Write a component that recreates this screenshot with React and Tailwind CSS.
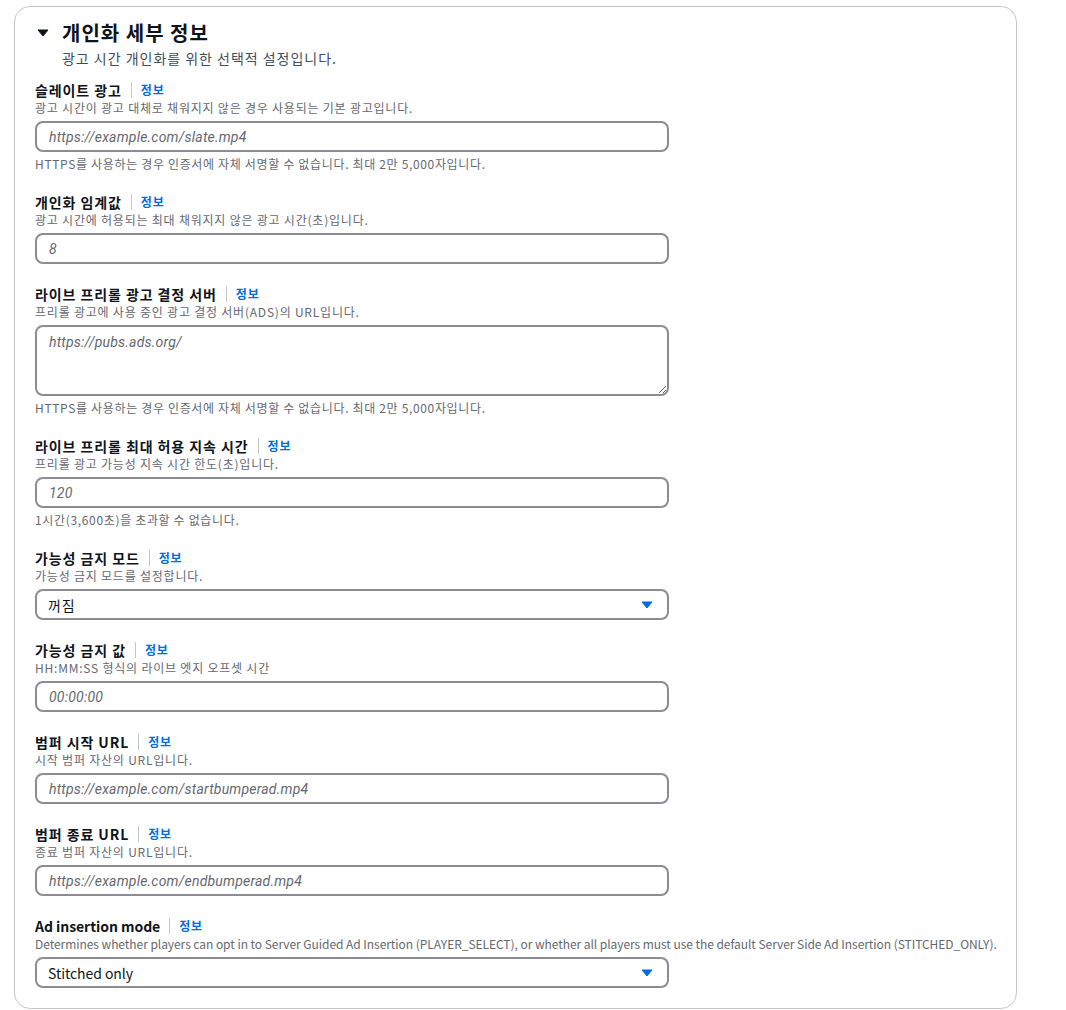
const fields = [
  {
    label: "슬레이트 광고",
    desc: "광고 시간이 광고 대체로 채워지지 않은 경우 사용되는 기본 광고입니다.",
    placeholder: "https://example.com/slate.mp4",
    hint: "HTTPS를 사용하는 경우 인증서에 자체 서명할 수 없습니다. 최대 2만 5,000자입니다.",
  },
  {
    label: "개인화 임계값",
    desc: "광고 시간에 허용되는 최대 채워지지 않은 광고 시간(초)입니다.",
    placeholder: "8",
  },
  {
    label: "라이브 프리롤 광고 결정 서버",
    desc: "프리롤 광고에 사용 중인 광고 결정 서버(ADS)의 URL입니다.",
    placeholder: "https://pubs.ads.org/",
    textarea: true,
    hint: "HTTPS를 사용하는 경우 인증서에 자체 서명할 수 없습니다. 최대 2만 5,000자입니다.",
  },
  {
    label: "라이브 프리롤 최대 허용 지속 시간",
    desc: "프리롤 광고 가능성 지속 시간 한도(초)입니다.",
    placeholder: "120",
    hint: "1시간(3,600초)을 초과할 수 없습니다.",
  },
  {
    label: "가능성 금지 모드",
    desc: "가능성 금지 모드를 설정합니다.",
    select: "꺼짐",
  },
  {
    label: "가능성 금지 값",
    desc: "HH:MM:SS 형식의 라이브 엣지 오프셋 시간",
    placeholder: "00:00:00",
  },
  {
    label: "범퍼 시작 URL",
    desc: "시작 범퍼 자산의 URL입니다.",
    placeholder: "https://example.com/startbumperad.mp4",
  },
  {
    label: "범퍼 종료 URL",
    desc: "종료 범퍼 자산의 URL입니다.",
    placeholder: "https://example.com/endbumperad.mp4",
  },
  {
    label: "Ad insertion mode",
    desc: "Determines whether players can opt in to Server Guided Ad Insertion (PLAYER_SELECT), or whether all players must use the default Server Side Ad Insertion (STITCHED_ONLY).",
    select: "Stitched only",
  },
];

// hangul renders narrower here than in the reference, so widen it a bit
const ko = (s) => (/[가-힣]/.test(s) ? "tracking-[0.065em]" : "tracking-[-0.05px]");

const inputBase =
  "block w-[634px] rounded-lg border-2 border-[#8c8c94] bg-white px-3 font-[Roboto] text-sm tracking-[0.015em] text-[#0f141a] outline-none placeholder:italic placeholder:text-[#656871]";

function Field({ f }) {
  return (
    <div className="flex flex-col">
      <div className="flex h-5 items-center">
        <span className={"text-sm font-bold text-[#0f141a] " + ko(f.label)}>{f.label}</span>
        <span className="mx-[9px] h-4 w-px bg-[#c6c6cd]" />
        <span className="text-xs font-bold tracking-[0.07em] text-[#006ce0]">정보</span>
      </div>
      <div className={"whitespace-nowrap text-xs leading-4 text-[#656871] " + ko(f.desc)}>{f.desc}</div>
      <div className="mt-[5px]">
        {f.select ? (
          <div className="flex h-[31px] w-[634px] items-center justify-between rounded-lg border-2 border-[#8c8c94] bg-white pl-[11px] pr-[14px] text-sm text-[#0f141a]">
            <span className={ko(f.select)}>{f.select}</span>
            <svg width="12" height="8" viewBox="0 0 12 8">
              <path d="M1 1h10L6 7z" fill="#006ce0" stroke="#006ce0" strokeLinejoin="round" />
            </svg>
          </div>
        ) : f.textarea ? (
          <textarea
            readOnly
            placeholder={f.placeholder}
            className={inputBase + " h-[71px] py-[5px] leading-5"}
          />
        ) : (
          <input readOnly placeholder={f.placeholder} className={inputBase + " h-[31px]"} />
        )}
      </div>
      {f.hint && (
        <div className="mt-1 text-xs leading-4 tracking-[0.055em] text-[#656871]">{f.hint}</div>
      )}
    </div>
  );
}

export default function App() {
  return (
    <div
      className="min-h-[1010px] bg-white pl-[14px] pt-[6px]"
      style={{ fontFamily: '"Noto Sans CJK KR", "Open Sans", sans-serif' }}
    >
      <div className="w-[1003px] rounded-2xl border border-[#c6c6cd] px-5 pb-5 pt-[14px]">
        <div className="flex items-center">
          <svg width="14" height="10" viewBox="0 0 14 10" className="ml-[1px] mr-[12px]">
            <path d="M2 2h10L7 8z" fill="#0f141a" stroke="#0f141a" strokeLinejoin="round" />
          </svg>
          <h2 className="text-xl font-bold leading-6 tracking-[0.05em] text-[#0f141a]">
            개인화 세부 정보
          </h2>
        </div>
        <p className="ml-[27px] mt-[3px] text-sm leading-5 tracking-[0.07em] text-[#414d5c]">
          광고 시간 개인화를 위한 선택적 설정입니다.
        </p>
        <div className="mt-3 flex flex-col gap-5">
          {fields.map((f) => (
            <Field key={f.label} f={f} />
          ))}
        </div>
      </div>
    </div>
  );
}
